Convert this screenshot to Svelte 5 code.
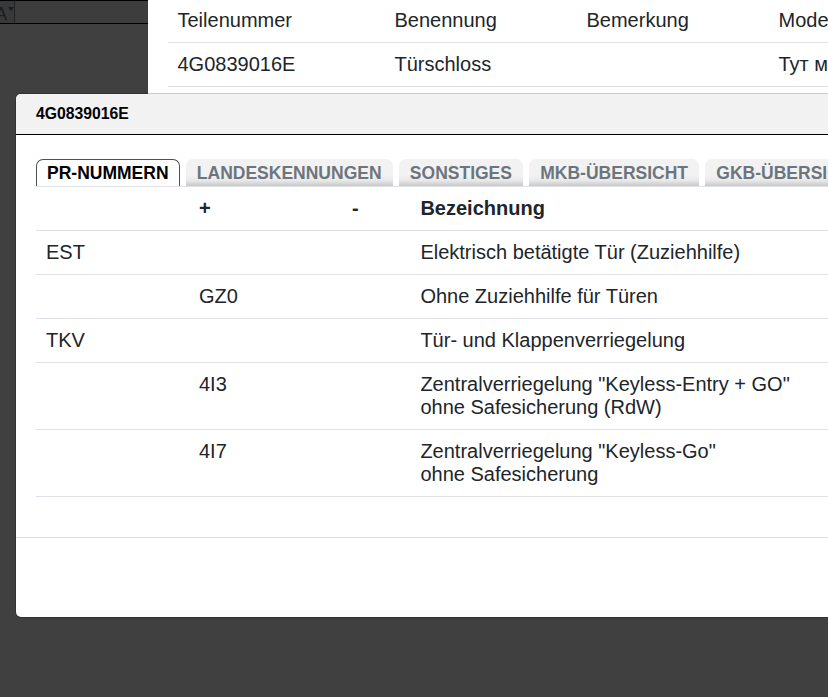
<script lang="ts">
  const tabs = ['PR-Nummern', 'Landeskennungen', 'Sonstiges', 'MKB-Übersicht', 'GKB-Übersicht']
  let active = $state(0)

  const parts = [
    ['Teilenummer', 'Benennung', 'Bemerkung', 'Modell'],
    ['4G0839016E', 'Türschloss', '', 'Тут мо'],
  ]

  const rows = [
    { family: 'EST', plus: '', minus: '', text: 'Elektrisch betätigte Tür (Zuziehhilfe)' },
    { family: '', plus: 'GZ0', minus: '', text: 'Ohne Zuziehhilfe für Türen' },
    { family: 'TKV', plus: '', minus: '', text: 'Tür- und Klappenverriegelung' },
    { family: '', plus: '4I3', minus: '', text: 'Zentralverriegelung "Keyless-Entry + GO"\nohne Safesicherung (RdW)' },
    { family: '', plus: '4I7', minus: '', text: 'Zentralverriegelung "Keyless-Go"\nohne Safesicherung' },
  ]
</script>

<div class="page">
  <div class="behind">
    <aside>
      <div class="toolbar">
        <button class="tool" aria-label="Schrift">
          <span>A</span>
          <svg width="6" height="4" viewBox="0 0 6 4"><path d="M0 0h6L3 4z" /></svg>
        </button>
      </div>
    </aside>
    <main>
      {#each parts as part}
        <div class="part">
          {#each part as cell}<span>{cell}</span>{/each}
        </div>
      {/each}
    </main>
  </div>

  <div class="modal" role="dialog" aria-label="4G0839016E">
    <header>4G0839016E</header>
    <div class="body">
      <nav>
        {#each tabs as tab, i}
          <button class="tab" class:active={active === i} onclick={() => (active = i)}>{tab}</button>
        {/each}
      </nav>
      <div class="row head">
        <span></span><span>+</span><span>-</span><span>Bezeichnung</span>
      </div>
      {#each rows as row}
        <div class="row">
          <span>{row.family}</span><span>{row.plus}</span><span>{row.minus}</span><span>{row.text}</span>
        </div>
      {/each}
    </div>
    <footer></footer>
  </div>
</div>

<style>
  :global(body) {
    overflow: hidden;
  }

  .page {
    position: relative;
    width: 100vw;
    height: 100vh;
    overflow: hidden;
    background: #404040;
    color: #212529;
    font: 20px/23px "Liberation Sans", Arial, sans-serif;
  }

  .behind {
    display: flex;
  }

  aside {
    flex: 0 0 148px;
  }

  .toolbar {
    box-sizing: border-box;
    height: 24px;
    border-top: 1px solid #000;
    border-bottom: 1px solid #000;
    background: #3d3d3d;
    overflow: hidden;
  }

  .tool {
    box-sizing: border-box;
    width: 15px;
    height: 22px;
    padding: 0;
    border: 0;
    border-right: 1px solid #222;
    background: #393939;
    color: #1a1d1f;
    font: 18px/27px "Liberation Sans", Arial, sans-serif;
    display: flex;
    align-items: flex-start;
  }

  .tool span {
    margin-left: -5px;
  }

  .tool svg {
    flex: none;
    margin-top: 6px;
    margin-left: 1px;
    fill: currentColor;
  }

  main {
    flex: 1;
    min-width: 0;
    height: 110px;
    padding-left: 20px;
    background: #fff;
    overflow: hidden;
  }

  .part {
    display: grid;
    grid-template-columns: 217px 192px 192px 192px;
    border-bottom: 1px solid #dee2e6;
  }

  .part span {
    padding: 10px 9.5px;
    white-space: nowrap;
  }

  .part:first-child span {
    padding-top: 9px;
  }

  .modal {
    position: absolute;
    top: 94px;
    left: 16px;
    width: 1100px;
    height: 523px;
    border-radius: 5px;
    background: #fff;
    box-shadow: 0 0 0 1px rgba(0, 0, 0, .2);
    overflow: hidden;
    display: flex;
    flex-direction: column;
  }

  header {
    box-sizing: border-box;
    height: 41px;
    padding: 0 20px;
    border-bottom: 1px solid #000;
    background: #f2f2f2;
    color: #000;
    font-size: 15.75px;
    font-weight: bold;
    line-height: 39px;
  }

  .body {
    box-sizing: border-box;
    height: 403px;
    padding: 24px 20px 0;
    border-bottom: 1px solid #dee2e6;
  }

  nav {
    display: flex;
    gap: 6.3px;
    border-bottom: 1px solid #dee2e6;
  }

  .tab {
    box-sizing: border-box;
    flex: none;
    height: 27px;
    padding: 0 10px;
    border: 1px solid transparent;
    border-bottom: 0;
    border-radius: 7px 7px 0 0;
    background: linear-gradient(#f2f2f2 60%, #e8e8e8 80%, #c8c8c8) border-box;
    color: #6c757d;
    font: bold 17.5px/26px "Liberation Sans", Arial, sans-serif;
    text-transform: uppercase;
    white-space: nowrap;
  }

  .tab.active {
    border-color: #495057;
    background: #fff;
    color: #000;
  }

  .row {
    display: grid;
    grid-template-columns: 153px 153px 68.4px 1fr;
    border-bottom: 1px solid #dee2e6;
  }

  .row span {
    padding: 10px;
    white-space: pre-line;
  }

  .head {
    font-weight: bold;
  }
</style>
